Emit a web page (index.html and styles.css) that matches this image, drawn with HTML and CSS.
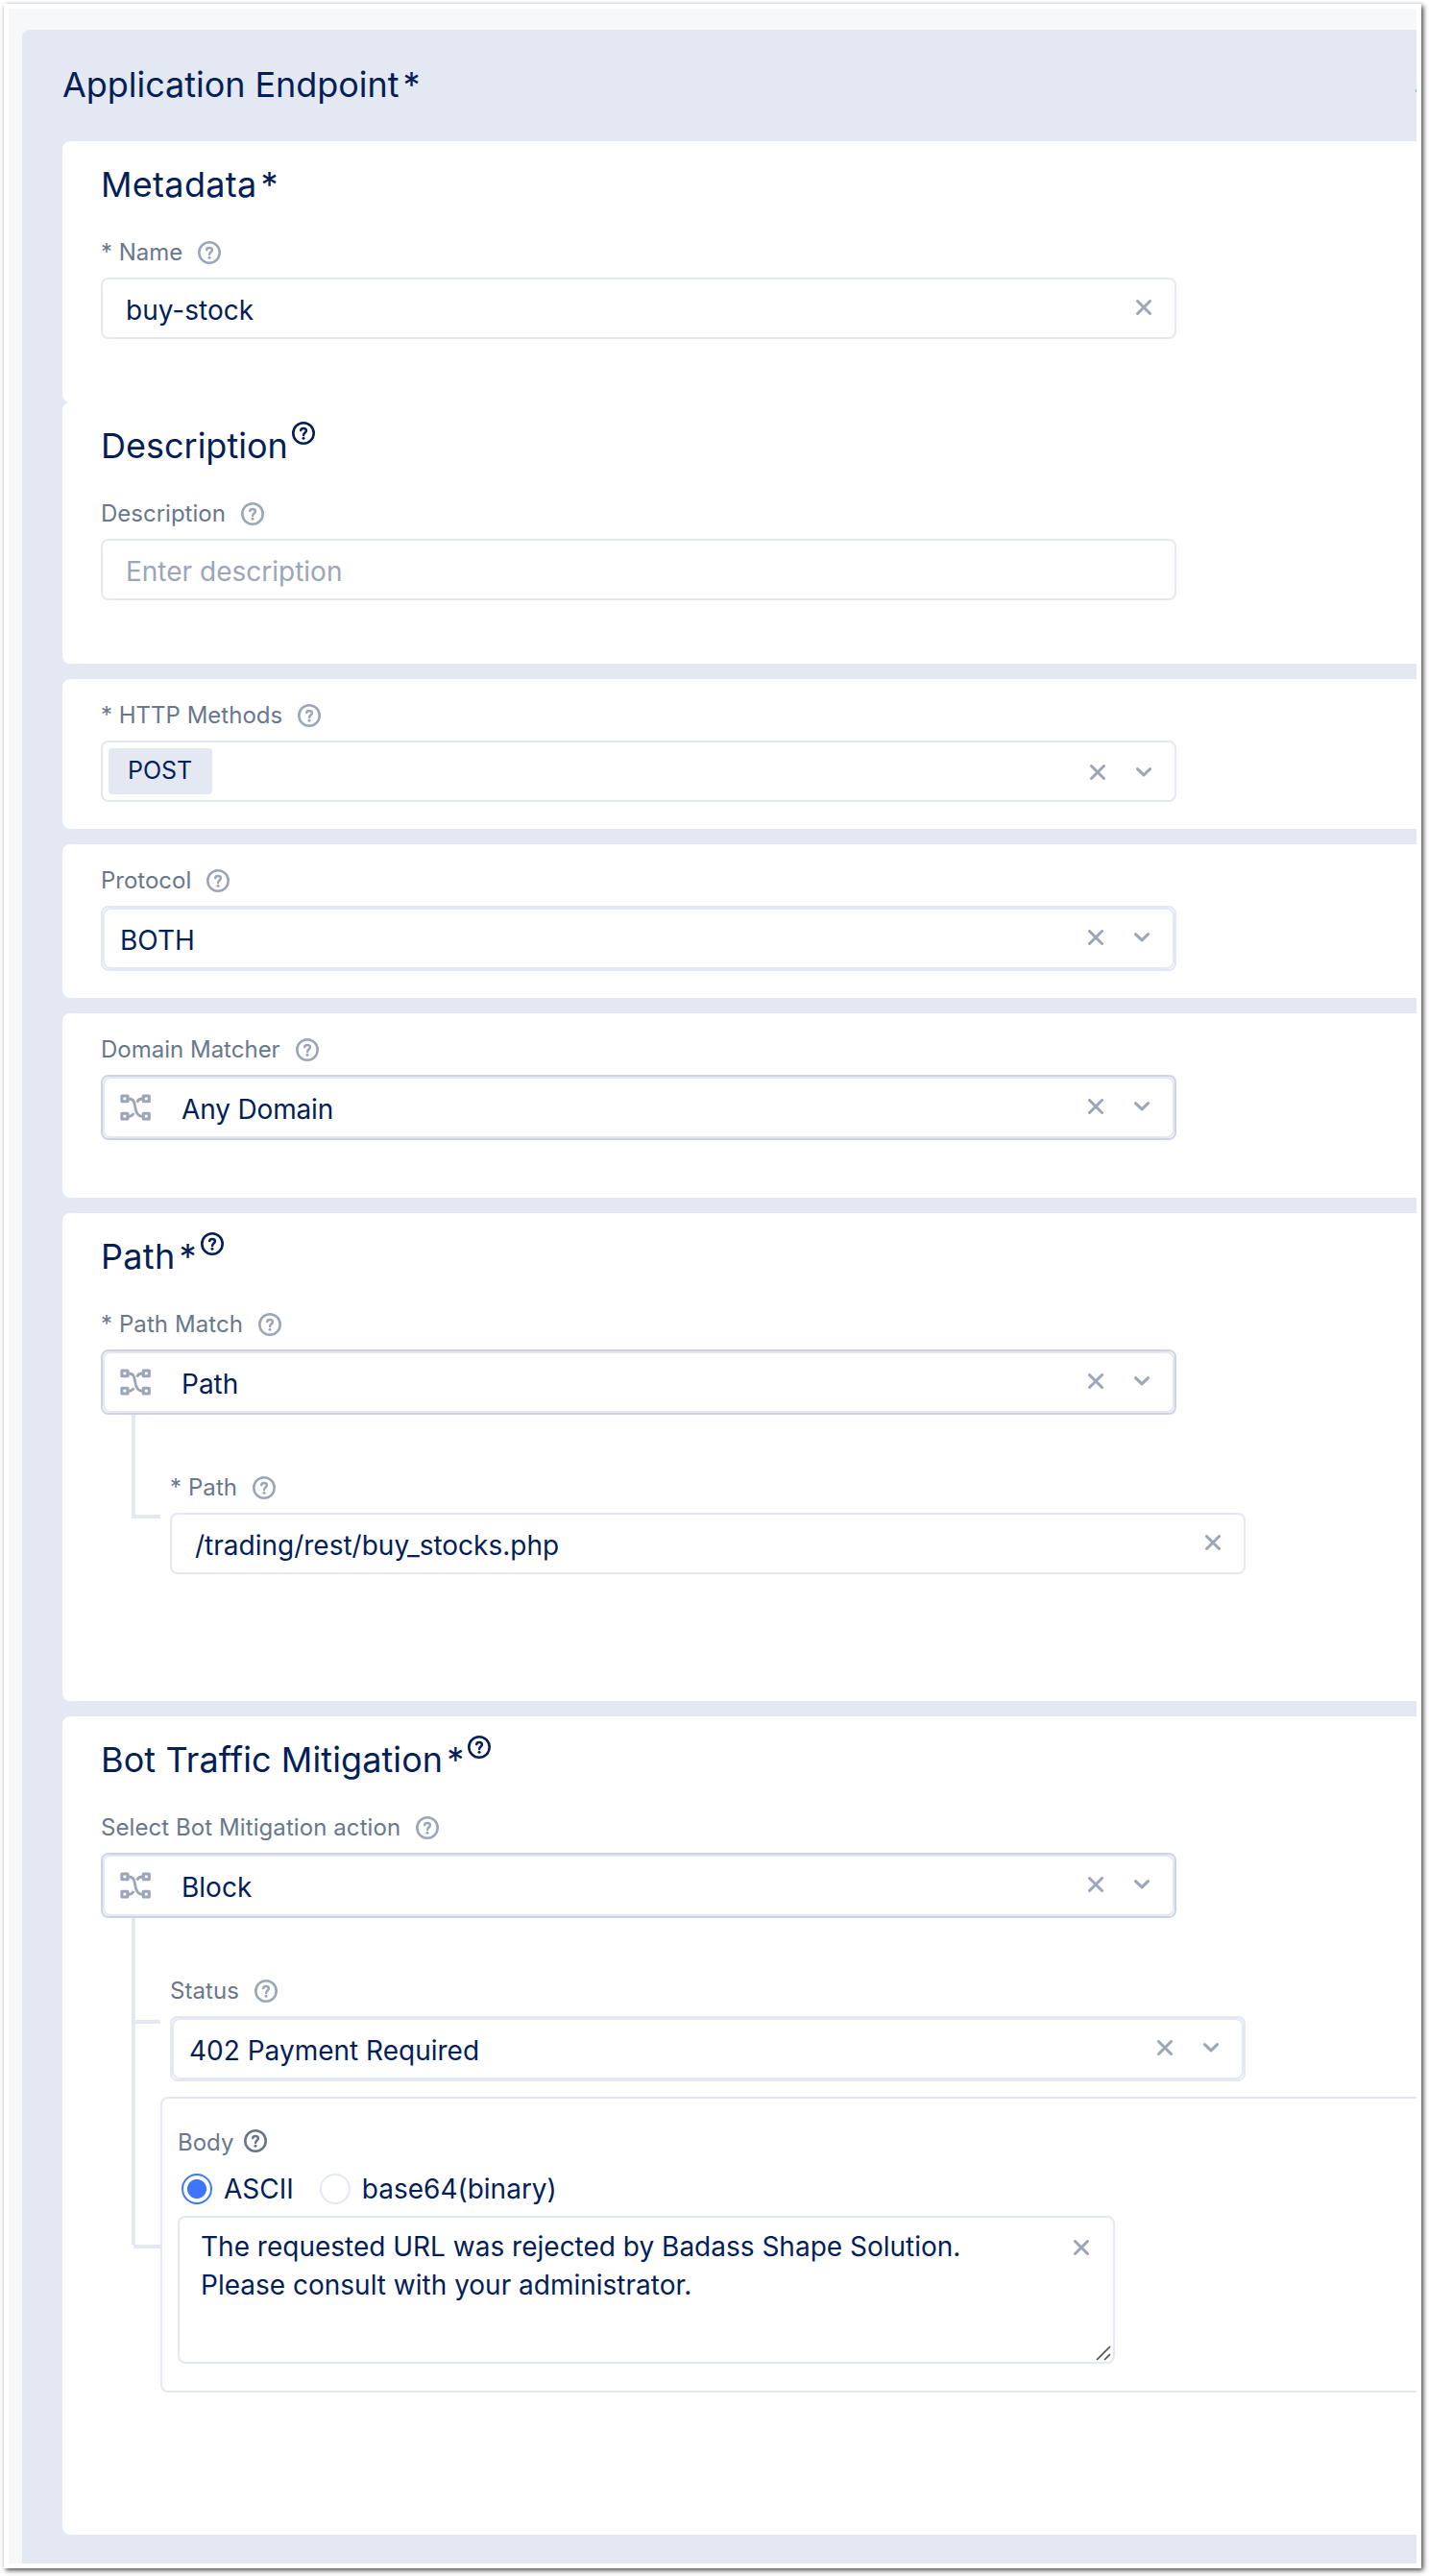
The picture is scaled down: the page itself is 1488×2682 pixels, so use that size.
FILE: index.html
```
<!DOCTYPE html>
<html lang="en">
<head>
<meta charset="utf-8">
<title>Application Endpoint</title>
<link rel="stylesheet" href="styles.css">
</head>
<body>
<svg class="sprite" aria-hidden="true">
  <symbol id="help" viewBox="0 0 24 24">
    <circle cx="12" cy="12" r="10.7" fill="none" stroke="currentColor" stroke-width="2.6"/>
    <path d="M9.2 9.1C9.4 7.7 10.6 6.9 12 6.9C13.7 6.9 14.9 8 14.9 9.4C14.9 11.4 12.1 11.6 12.1 13.9" fill="none" stroke="currentColor" stroke-width="2.5" stroke-linecap="round"/>
    <circle cx="12" cy="17.3" r="1.5" fill="currentColor"/>
  </symbol>
  <symbol id="clear" viewBox="0 0 16 16">
    <path d="M1.5 1.5L14.5 14.5M14.5 1.5L1.5 14.5" fill="none" stroke="currentColor" stroke-width="3" stroke-linecap="round"/>
  </symbol>
  <symbol id="chevron" viewBox="0 0 16 10">
    <path d="M1.5 1.6L8 7.9L14.5 1.6" fill="none" stroke="currentColor" stroke-width="3" stroke-linecap="round" stroke-linejoin="round"/>
  </symbol>
  <symbol id="branch" viewBox="0 0 32 28">
    <g fill="none" stroke="currentColor" stroke-width="3.1" stroke-linejoin="round">
      <rect x="1.9" y="2" width="6" height="5.8"/>
      <rect x="24.3" y="2" width="6" height="5.8"/>
      <rect x="1.9" y="20.2" width="6" height="5.8"/>
      <rect x="24.3" y="20.2" width="6" height="5.8"/>
      <path stroke-width="2.8" d="M9 5C14.5 5 15 9 15.8 14S18 23.3 23 23.3M23 5C20 5 18.7 6 17.5 8.6M9 23.3C12 23.3 13.2 22.3 14.2 20"/>
    </g>
  </symbol>
</svg>

<div class="frame">
  <div class="viewport">
    <main class="panel">
      <header class="panel__header">
        <h1 class="title title--tight">Application Endpoint<span class="req">*</span></h1>
        <span class="panel__toggle"></span>
      </header>

      <section class="card card--short">
        <h2 class="title title--loose">Metadata<span class="req">*</span></h2>
        <div class="label">* Name <svg class="help"><use href="#help"/></svg></div>
        <div class="field"><span class="field__text">buy-stock</span><svg class="clear"><use href="#clear"/></svg></div>
      </section>

      <section class="card card--short">
        <h2 class="title">Description<svg class="help"><use href="#help"/></svg></h2>
        <div class="label">Description <svg class="help"><use href="#help"/></svg></div>
        <div class="field"><span class="field__text field__text--placeholder">Enter description</span></div>
      </section>

      <section class="card card--plain card--gap">
        <div class="label">* HTTP Methods <svg class="help"><use href="#help"/></svg></div>
        <div class="field field--tags"><span class="tag">POST</span><svg class="clear"><use href="#clear"/></svg><svg class="chevron"><use href="#chevron"/></svg></div>
      </section>

      <section class="card card--plain card--gap">
        <div class="label">Protocol <svg class="help"><use href="#help"/></svg></div>
        <div class="select"><div class="select__box"><span class="select__text">BOTH</span><svg class="clear"><use href="#clear"/></svg><svg class="chevron"><use href="#chevron"/></svg></div></div>
      </section>

      <section class="card card--plain card--gap card--domain">
        <div class="label">Domain Matcher <svg class="help"><use href="#help"/></svg></div>
        <div class="select select--choice"><div class="select__box"><svg class="branch"><use href="#branch"/></svg><span class="select__text select__text--tight">Any Domain</span><svg class="clear"><use href="#clear"/></svg><svg class="chevron"><use href="#chevron"/></svg></div></div>
      </section>

      <section class="card card--gap card--path">
        <h2 class="title title--loose">Path<span class="req">*</span><svg class="help"><use href="#help"/></svg></h2>
        <div class="label label--loose">* Path Match <svg class="help"><use href="#help"/></svg></div>
        <div class="select select--choice"><div class="select__box"><svg class="branch"><use href="#branch"/></svg><span class="select__text">Path</span><svg class="clear"><use href="#clear"/></svg><svg class="chevron"><use href="#chevron"/></svg></div></div>
        <div class="tree">
          <div class="tree__rail"><div class="tree__elbow tree__elbow--path"></div></div>
          <div class="tree__content">
            <div class="label label--loose">* Path <svg class="help"><use href="#help"/></svg></div>
            <div class="field"><span class="field__text">/trading/rest/buy_stocks.php</span><svg class="clear"><use href="#clear"/></svg></div>
          </div>
        </div>
      </section>

      <section class="card card--gap card--bot">
        <h2 class="title title--wide">Bot Traffic Mitigation<span class="req">*</span><svg class="help"><use href="#help"/></svg></h2>
        <div class="label label--loose">Select Bot Mitigation action <svg class="help"><use href="#help"/></svg></div>
        <div class="select select--choice"><div class="select__box"><svg class="branch"><use href="#branch"/></svg><span class="select__text">Block</span><svg class="clear"><use href="#clear"/></svg><svg class="chevron"><use href="#chevron"/></svg></div></div>
        <div class="tree">
          <div class="tree__rail">
            <div class="tree__elbow tree__elbow--status"></div>
            <div class="tree__stem"></div>
            <div class="tree__foot"></div>
          </div>
          <div class="tree__content">
            <div class="label label--loose">Status <svg class="help"><use href="#help"/></svg></div>
            <div class="select"><div class="select__box"><span class="select__text">402 Payment Required</span><svg class="clear"><use href="#clear"/></svg><svg class="chevron"><use href="#chevron"/></svg></div></div>
            <div class="body-group">
              <div class="label label--body">Body <svg class="help"><use href="#help"/></svg></div>
              <div class="radios">
                <span class="radio radio--on"></span><span class="radios__text">ASCII</span>
                <span class="radio"></span><span class="radios__text">base64(binary)</span>
              </div>
              <div class="textarea">
                <p class="textarea__text">The requested URL was rejected by Badass Shape Solution.<br>Please consult with your administrator.</p>
                <svg class="clear"><use href="#clear"/></svg>
                <svg class="grip" viewBox="0 0 16 16"><path d="M1 15L15 1M9 15L15 9" fill="none" stroke="#4a4a4a" stroke-width="1.7"/></svg>
              </div>
            </div>
          </div>
        </div>
      </section>
    </main>
  </div>
</div>
</body>
</html>
```
FILE: styles.css
```
* { box-sizing: border-box; }

body {
  margin: 0;
  padding: 4px 8px 8px 4px;
  width: 1488px;
  height: 2682px;
  overflow: hidden;
  background: #fff;
  color: #041e57;
  font-family: Inter, "Liberation Sans", sans-serif;
  font-size: 28px;
}

svg { display: block; flex: none; }
.sprite { display: none; }

.frame {
  height: 2670px;
  padding: 5px;
  background: #fff;
  box-shadow: 2px 2px 5px rgba(0, 0, 0, .75);
}

.viewport {
  height: 2660px;
  padding: 22px 0 0 14px;
  overflow: hidden;
  background: #f7f8fa;
}

.panel {
  height: 2638px;
  padding: 32px 0 0 42px;
  border-radius: 8px 0 0 0;
  background: #e4e8f2;
}

.panel__header {
  display: flex;
  align-items: center;
  justify-content: space-between;
  height: 50px;
  margin-bottom: 34px;
}

.panel__toggle {
  width: 1px;
  height: 3px;
  margin-top: 12px;
  background: #9aa5b8;
}

.title {
  display: flex;
  align-items: center;
  height: 50px;
  margin: 0;
  font-size: 36px;
  font-weight: 400;
  line-height: 50px;
}
.title--tight { letter-spacing: -.04px; }
.title--loose { letter-spacing: .3px; }
.title--wide { letter-spacing: .1px; }
.req { margin-left: 4px; letter-spacing: 0; }
.title .help { margin: -27px 0 0 4px; color: #041e57; }

.card {
  padding: 20px 0 0 40px;
  border-radius: 8px 0 0 8px;
  background: #fff;
}
.card .title { margin: 0 0 31px 0; }
.card--gap { margin-top: 16px; }
.card--short { height: 272px; }
.card--plain { padding: 23px 0 28px 40px; }
.card--domain { padding-bottom: 60px; }
.card--path { height: 508px; }
.card--bot { height: 852px; }

.label {
  display: flex;
  align-items: center;
  gap: 16px;
  height: 29px;
  margin: 0 0 12px;
  color: #69778c;
  font-size: 24px;
  line-height: 29px;
}
.label--loose { letter-spacing: .08px; }
.help { width: 24px; height: 24px; color: #9ba6b9; }

.clear, .chevron, .branch { color: #9ba6b9; }
.clear { width: 16px; height: 16px; }
.chevron { width: 16px; height: 10px; margin-left: 32px; }
.branch { width: 32px; height: 28px; margin-right: 32px; }

.field {
  display: flex;
  align-items: center;
  width: 1120px;
  height: 64px;
  padding: 0 24px;
  border: 2px solid #e4e8f2;
  border-radius: 8px;
}
.field__text { flex: 1; padding-top: 3px; }
.field__text--placeholder { color: #9ba6b9; }
.field .clear { margin-top: -2px; }
.field--tags { padding-left: 6px; }
.field--tags .clear, .field--tags .chevron { margin-top: 2px; }

.tag {
  width: 108px;
  height: 48px;
  margin-right: auto;
  padding-left: 20px;
  border-radius: 4px;
  background: #e4e8f2;
  font-size: 25px;
  line-height: 46px;
}

.select {
  display: flex;
  width: 1120px;
  height: 68px;
  border: 2px solid #e4e8f2;
  border-radius: 8px;
}
.select--choice { border-color: #cdd3e3; }
.select__box {
  display: flex;
  flex: 1;
  align-items: center;
  padding: 0 24px 0 16px;
  border: 2px solid #e4e8f2;
  border-radius: 8px;
}
.select__text { flex: 1; padding-top: 3px; }
.select__text--tight { letter-spacing: -.15px; }
.select .clear, .select .chevron { margin-top: -2px; }

.tree { display: flex; }
.tree__rail { flex: none; width: 72px; padding-left: 32px; }
.tree__content { flex: 1; padding-top: 61px; }
.tree__elbow {
  width: 30px;
  border: solid #e4e8f2;
  border-width: 0 0 4px 4px;
}
.tree__elbow--path { height: 108px; }
.tree__elbow--status { height: 110px; }
.tree__stem { width: 4px; height: 230px; background: #e4e8f2; }
.tree__foot { width: 28px; height: 4px; margin-left: 2px; background: #e4e8f2; }

.body-group {
  height: 308px;
  margin: 16px 0 0 -10px;
  padding: 31px 0 0 16px;
  border: 2px solid #e4e8f2;
  border-right: 0;
  border-radius: 8px 0 0 8px;
}
.label--body { gap: 11px; margin-bottom: 18px; }
.label--body .help { margin-top: -3px; color: #66758b; }

.radios {
  display: flex;
  align-items: center;
  height: 32px;
  margin-bottom: 12px;
  padding-left: 4px;
  line-height: 32px;
}
.radios__text { margin: 0 27px 0 12px; }
.radio {
  width: 32px;
  height: 32px;
  border: 2px solid #e4e8f2;
  border-radius: 50%;
}
.radio--on {
  border-color: #3d75ff;
  background: radial-gradient(circle, #3d75ff 9.6px, #fff 10.4px);
}

.textarea {
  position: relative;
  display: flex;
  width: 976px;
  height: 154px;
  padding: 10px 25px 0 22px;
  border: 2px solid #e4e8f2;
  border-radius: 8px;
  line-height: 40px;
}
.textarea__text { flex: 1; margin: 0; }
.textarea .clear { margin-top: 13px; }
.grip { position: absolute; right: 2px; bottom: 1px; width: 16px; height: 16px; }
```
